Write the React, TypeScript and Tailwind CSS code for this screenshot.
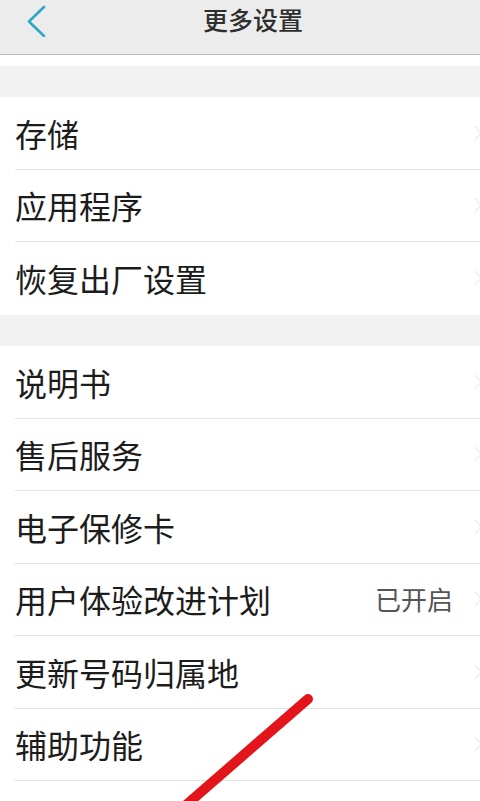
import React from "react";

const font = { fontFamily: '"Noto Sans CJK SC", "Noto Sans", sans-serif' };

type Item = { label: string; value?: string };

const groupA: Item[] = [{ label: "存储" }, { label: "应用程序" }, { label: "恢复出厂设置" }];

const groupB: Item[] = [
  { label: "说明书" },
  { label: "售后服务" },
  { label: "电子保修卡" },
  { label: "用户体验改进计划", value: "已开启" },
  { label: "更新号码归属地" },
  { label: "辅助功能" },
];

function Row({ item, last }: { item: Item; last?: boolean }) {
  return (
    <div className="pl-[15px] bg-white">
      <div
        className={`h-[72.5px] flex items-center ${last ? "" : "border-b border-[#e3e3e3]"}`}
      >
        <span className="flex-1 text-[32px] leading-none text-[#1c1c1c]">{item.label}</span>
        {item.value && (
          <span className="text-[26px] leading-none text-[#555] mr-[20px]">{item.value}</span>
        )}
        <svg width="10" height="18" viewBox="0 0 10 18" className="mr-[-3px]">
          <polyline points="2,2 8,9 2,16" fill="none" stroke="#eeeeee" strokeWidth="1.5" />
        </svg>
      </div>
    </div>
  );
}

export default function App() {
  return (
    <div className="relative w-[480px] h-[801px] overflow-hidden bg-white" style={font}>
      {/* header */}
      <div className="h-[55px] bg-[#ececec] border-b border-[#bcbcbc] flex items-center relative">
        <svg width="24" height="34" viewBox="0 0 24 34" className="ml-[24px] mb-[14px]">
          <polyline
            points="20,4 5,18.5 20,33"
            fill="none"
            stroke="#2ba9c2"
            strokeWidth="2.6"
            strokeLinecap="round"
            strokeLinejoin="round"
          />
        </svg>
        <div className="flex-1 flex justify-center pr-[22px] pb-[16px]">
          <span className="text-[25px] font-medium text-[#2e2e2e] leading-none">更多设置</span>
        </div>
      </div>

      <div className="h-[11px] bg-white" />
      <div className="h-[31px] bg-[#f2f2f2]" />
      {groupA.map((it, i) => (
        <Row key={it.label} item={it} last={i === groupA.length - 1} />
      ))}
      <div className="h-[31.5px] bg-[#f2f2f2]" />
      {groupB.map((it) => (
        <Row key={it.label} item={it} />
      ))}
      <div className="h-[72.5px] bg-white" />

      {/* red annotation stroke */}
      <svg
        className="absolute left-0 top-0 pointer-events-none"
        width="480"
        height="801"
        viewBox="0 0 480 801"
      >
        <line
          x1="308"
          y1="699"
          x2="178"
          y2="812"
          stroke="#e3141a"
          strokeWidth="10"
          strokeLinecap="round"
        />
      </svg>
    </div>
  );
}
